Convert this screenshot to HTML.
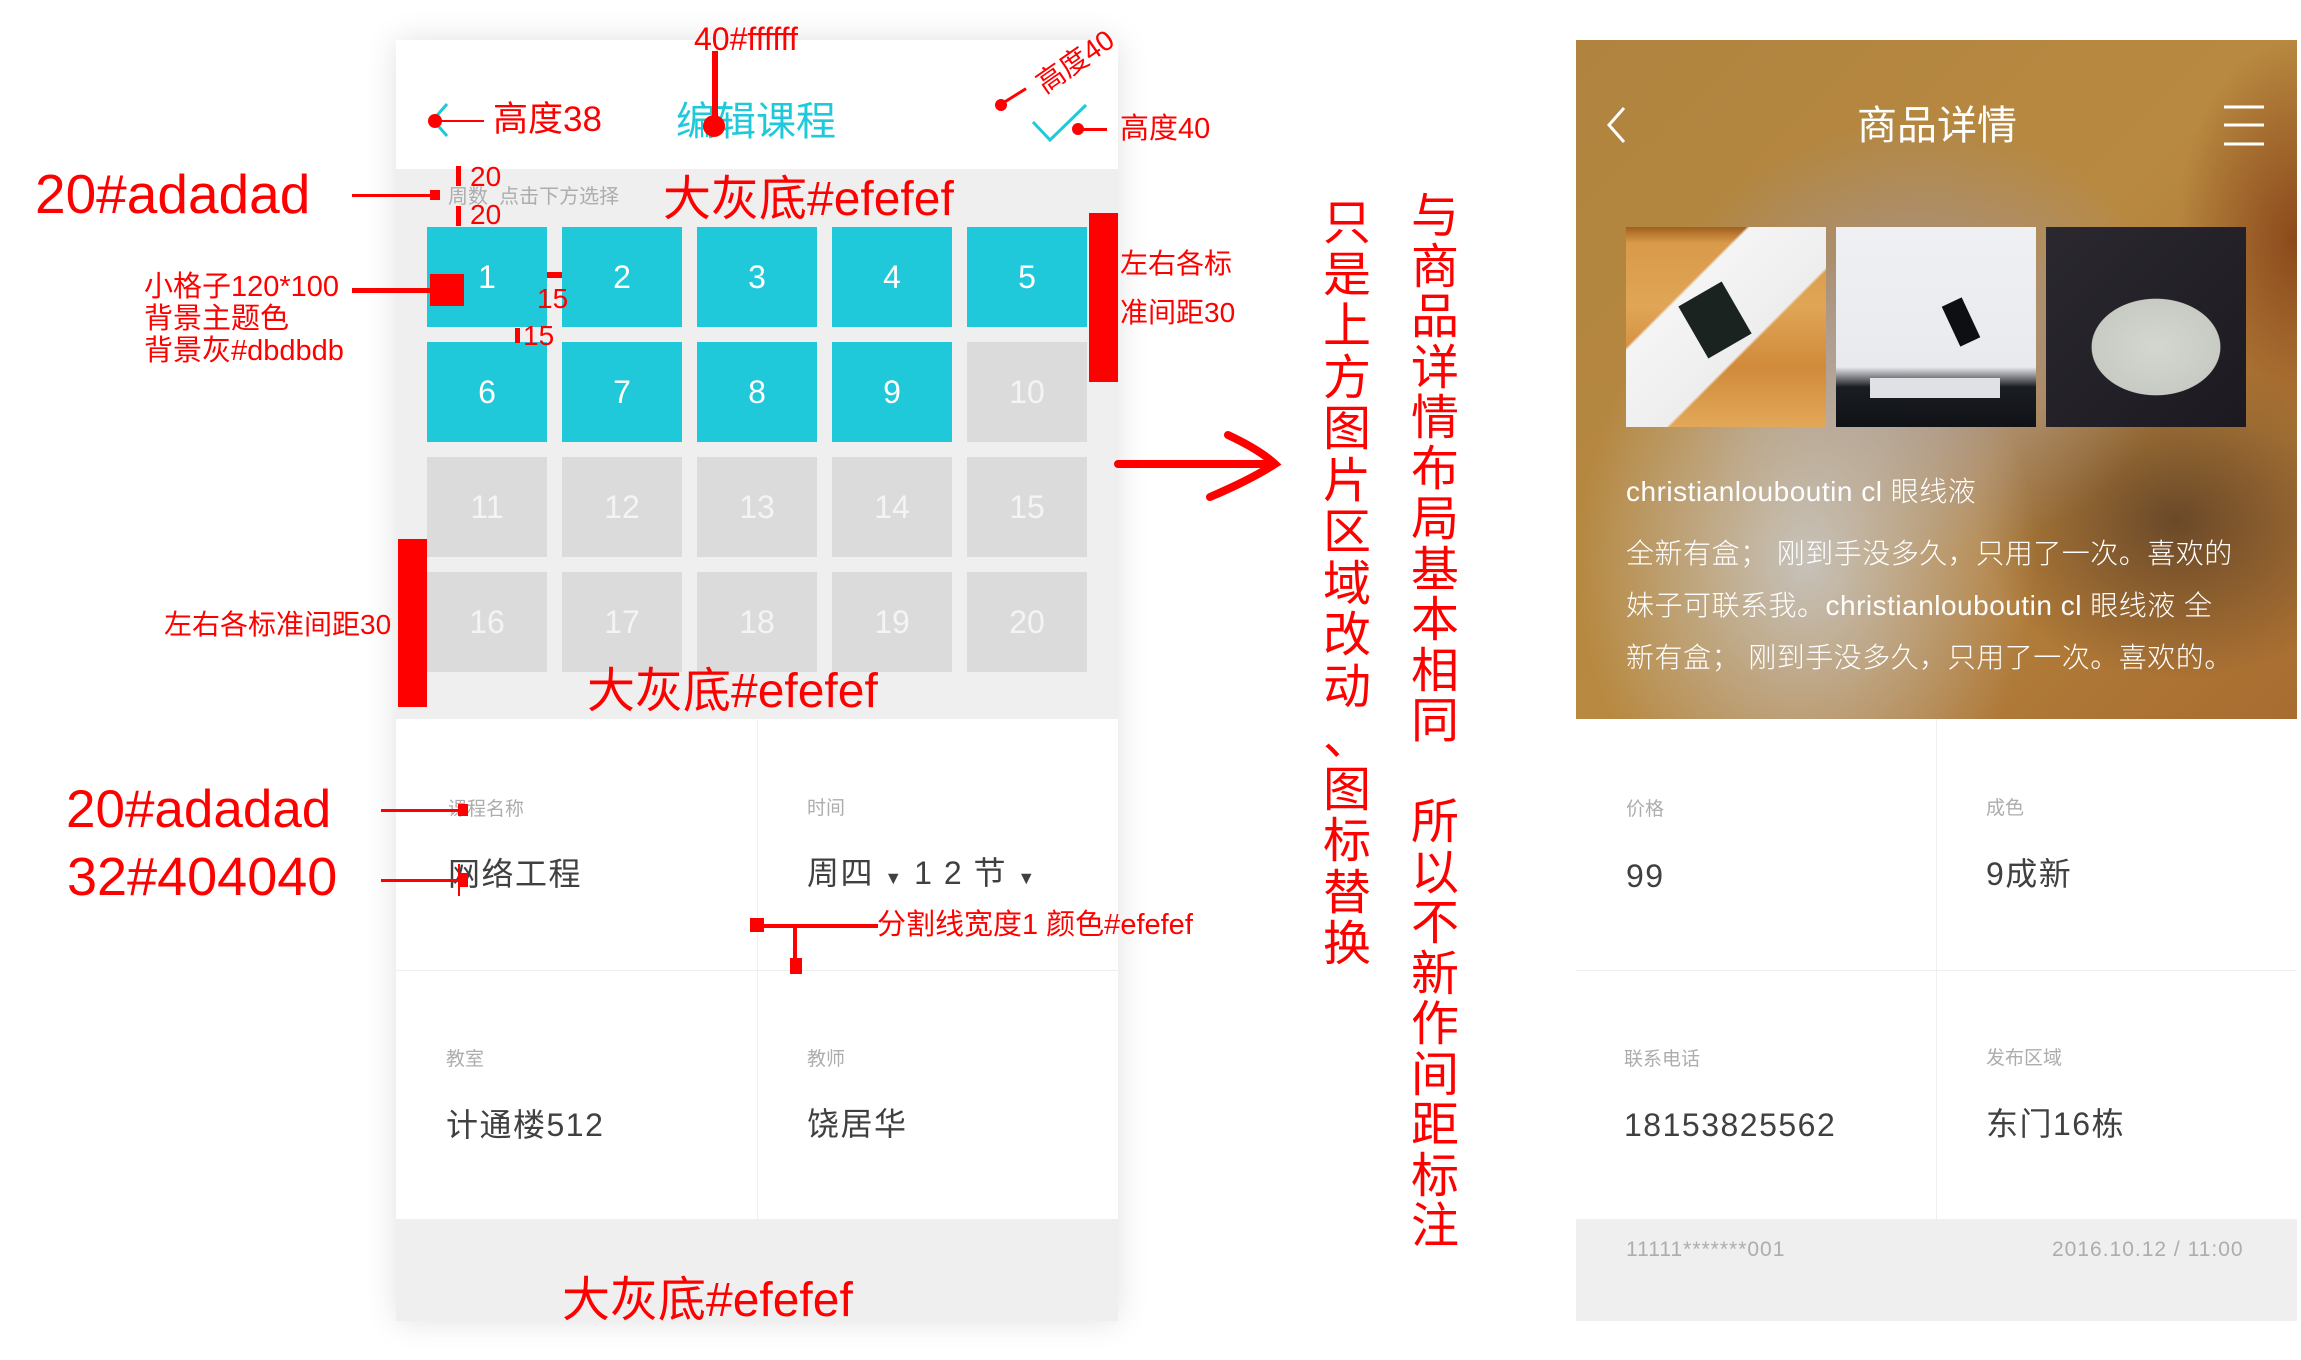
<!DOCTYPE html>
<html><head><meta charset="utf-8">
<style>
*{margin:0;padding:0;box-sizing:border-box}
body{width:2301px;height:1360px;background:#fff;position:relative;overflow:hidden;font-family:"Liberation Sans","Noto Sans CJK SC",sans-serif}
.a{position:absolute;white-space:nowrap;line-height:1}
.r{color:#ff0000}
.rb{position:absolute;background:#ff0000}
.cell{position:absolute;width:120px;height:100px;color:#fff;font-size:32px;display:flex;align-items:center;justify-content:center;font-weight:300}
.t{background:#1fc9da}.g{background:#dbdbdb;color:#f4f4f4}
.lbl{position:absolute;font-size:19px;color:#adadad;line-height:1;white-space:nowrap}
.val{position:absolute;font-size:32px;color:#404040;line-height:1;letter-spacing:1.5px;white-space:nowrap}
.v{position:absolute;color:#ff0000;font-size:48px;width:52px;text-align:center}
</style></head><body>

<!-- LEFT PHONE -->
<div style="position:absolute;left:396px;top:40px;width:722px;height:1281px;box-shadow:0 0 30px rgba(0,0,0,0.12);background:#efefef"></div>
<div style="position:absolute;left:396px;top:40px;width:722px;height:129px;background:#fff"></div>
<svg class="a" style="left:425px;top:100px" width="40" height="42"><path d="M22 4 L8 20 L22 36" stroke="#1fc9da" stroke-width="3" fill="none"/></svg>
<div class="a" style="left:676px;top:102px;font-size:40px;color:#1fc9da">编辑课程</div>
<svg class="a" style="left:1030px;top:100px" width="60" height="46"><path d="M3 22 L20 40 L56 5" stroke="#1fc9da" stroke-width="3" fill="none"/></svg>
<div class="a" style="left:448px;top:187px;font-size:20px;color:#adadad">周数&nbsp;&nbsp;点击下方选择</div>

<div class="cell t" style="left:427px;top:227px">1</div>
<div class="cell t" style="left:562px;top:227px">2</div>
<div class="cell t" style="left:697px;top:227px">3</div>
<div class="cell t" style="left:832px;top:227px">4</div>
<div class="cell t" style="left:967px;top:227px">5</div>
<div class="cell t" style="left:427px;top:342px">6</div>
<div class="cell t" style="left:562px;top:342px">7</div>
<div class="cell t" style="left:697px;top:342px">8</div>
<div class="cell t" style="left:832px;top:342px">9</div>
<div class="cell g" style="left:967px;top:342px">10</div>
<div class="cell g" style="left:427px;top:457px">11</div>
<div class="cell g" style="left:562px;top:457px">12</div>
<div class="cell g" style="left:697px;top:457px">13</div>
<div class="cell g" style="left:832px;top:457px">14</div>
<div class="cell g" style="left:967px;top:457px">15</div>
<div class="cell g" style="left:427px;top:572px">16</div>
<div class="cell g" style="left:562px;top:572px">17</div>
<div class="cell g" style="left:697px;top:572px">18</div>
<div class="cell g" style="left:832px;top:572px">19</div>
<div class="cell g" style="left:967px;top:572px">20</div>

<div style="position:absolute;left:396px;top:719px;width:722px;height:500px;background:#fff"></div>
<div style="position:absolute;left:757px;top:719px;width:1px;height:500px;background:#efefef"></div>
<div style="position:absolute;left:396px;top:970px;width:722px;height:1px;background:#efefef"></div>
<div class="lbl" style="left:448px;top:800px">课程名称</div>
<div class="val" style="left:448px;top:858px">网络工程</div>
<div class="lbl" style="left:807px;top:799px">时间</div>
<div class="val" style="left:807px;top:857px">周四 <span style="font-size:18px">▼</span> 1 2 节 <span style="font-size:18px">▼</span></div>
<div class="lbl" style="left:446px;top:1050px">教室</div>
<div class="val" style="left:446px;top:1109px">计通楼512</div>
<div class="lbl" style="left:807px;top:1050px">教师</div>
<div class="val" style="left:807px;top:1108px">饶居华</div>

<!-- RIGHT PHONE -->
<div style="position:absolute;left:1576px;top:40px;width:721px;height:679px;overflow:hidden;background:
radial-gradient(ellipse 230px 300px at 230px 520px,rgba(200,200,200,0.9),rgba(200,200,200,0) 100%),
radial-gradient(ellipse 260px 220px at 340px 300px,rgba(160,150,160,0.95),rgba(160,150,160,0) 100%),
radial-gradient(ellipse 200px 160px at 600px 480px,rgba(60,40,30,0.6),rgba(60,40,30,0) 100%),
radial-gradient(ellipse 120px 200px at 720px 200px,rgba(130,60,20,0.8),rgba(130,60,20,0) 100%),
linear-gradient(135deg,#b0843f,#b88940 50%,#a86c30)"></div>
<svg class="a" style="left:1604px;top:104px" width="30" height="42"><path d="M20 4 L5 21 L20 38" stroke="#fff" stroke-width="3" fill="none"/></svg>
<div class="a" style="left:1857px;top:106px;font-size:40px;color:#fff">商品详情</div>
<svg class="a" style="left:2222px;top:104px" width="44" height="44"><path d="M2 3H42M2 21H42M2 40H42" stroke="#fff" stroke-width="3"/></svg>
<div style="position:absolute;left:1626px;top:227px;width:200px;height:200px;background:
linear-gradient(135deg,transparent 30%,#f4f4f4 31%,#eee 60%,transparent 61%),
linear-gradient(180deg,#a0601f 0,#d99a4a 8%,#e0a556 40%,#d08a3a 70%,#e2a858)"></div>
<div style="position:absolute;left:1690px;top:290px;width:50px;height:60px;background:#1b2320;transform:rotate(-30deg)"></div>
<div style="position:absolute;left:1836px;top:227px;width:200px;height:200px;background:linear-gradient(180deg,#eef0f4 0,#e8eaee 70%,#1a1d22 80%,#101216)"></div>
<div style="position:absolute;left:1870px;top:378px;width:130px;height:20px;background:#dfe1e4"></div>
<div style="position:absolute;left:1950px;top:300px;width:22px;height:44px;background:#0d0f12;transform:rotate(-25deg)"></div>
<div style="position:absolute;left:2046px;top:227px;width:200px;height:200px;background:
radial-gradient(ellipse 80px 60px at 110px 120px,#d4d6d0,#c8cac4 80%,transparent 81%),
linear-gradient(135deg,#2b2830,#1c1a20)"></div>
<div class="a" style="left:1626px;top:478px;font-size:28px;color:#fff;font-weight:300;letter-spacing:0.5px">christianlouboutin cl 眼线液</div>
<div class="a" style="left:1626px;top:528px;font-size:28px;color:#fff;line-height:52px;font-weight:300;letter-spacing:0.5px">全新有盒； 刚到手没多久，只用了一次。喜欢的<br>妹子可联系我。christianlouboutin cl 眼线液 全<br>新有盒； 刚到手没多久，只用了一次。喜欢的。</div>

<div style="position:absolute;left:1576px;top:719px;width:721px;height:500px;background:#fff"></div>
<div style="position:absolute;left:1936px;top:719px;width:1px;height:500px;background:#efefef"></div>
<div style="position:absolute;left:1576px;top:970px;width:721px;height:1px;background:#efefef"></div>
<div style="position:absolute;left:1576px;top:1219px;width:721px;height:102px;background:#efefef"></div>
<div class="lbl" style="left:1626px;top:800px">价格</div>
<div class="val" style="left:1626px;top:860px">99</div>
<div class="lbl" style="left:1986px;top:799px">成色</div>
<div class="val" style="left:1986px;top:858px">9成新</div>
<div class="lbl" style="left:1624px;top:1050px">联系电话</div>
<div class="val" style="left:1624px;top:1109px">18153825562</div>
<div class="lbl" style="left:1986px;top:1049px">发布区域</div>
<div class="val" style="left:1986px;top:1108px">东门16栋</div>
<div class="lbl" style="left:1626px;top:1239px;font-size:21px;letter-spacing:1px">11111*******001</div>
<div class="lbl" style="left:2052px;top:1239px;font-size:21px;letter-spacing:1px">2016.10.12 / 11:00</div>

<!-- ANNOTATIONS -->
<div class="a r" style="left:694px;top:23px;font-size:32px">40#ffffff</div>
<div class="rb" style="left:712px;top:51px;width:6px;height:74px"></div>
<div class="rb" style="left:703px;top:115px;width:22px;height:22px;border-radius:50%"></div>
<div class="rb" style="left:434px;top:120px;width:50px;height:2px"></div>
<div class="rb" style="left:428px;top:114px;width:14px;height:14px;border-radius:50%"></div>
<div class="a r" style="left:493px;top:102px;font-size:35px">高度38</div>
<div class="a r" style="left:1032px;top:48px;font-size:28px;transform:rotate(-35deg)">高度40</div>
<div class="rb" style="left:1002px;top:94px;width:26px;height:3px;transform:rotate(-32deg)"></div>
<div class="rb" style="left:995px;top:99px;width:12px;height:12px;border-radius:50%"></div>
<div class="rb" style="left:1079px;top:128px;width:28px;height:3px"></div>
<div class="rb" style="left:1072px;top:123px;width:12px;height:12px;border-radius:50%"></div>
<div class="a r" style="left:1120px;top:115px;font-size:29px">高度40</div>

<div class="a r" style="left:35px;top:167px;font-size:55px">20#adadad</div>
<div class="rb" style="left:352px;top:194px;width:86px;height:3px"></div>
<div class="rb" style="left:430px;top:190px;width:10px;height:10px"></div>
<div class="rb" style="left:456px;top:166px;width:5px;height:20px"></div>
<div class="rb" style="left:456px;top:206px;width:5px;height:20px"></div>
<div class="a r" style="left:470px;top:163px;font-size:28px">20</div>
<div class="a r" style="left:470px;top:201px;font-size:28px">20</div>
<div class="a r" style="left:663px;top:176px;font-size:48px">大灰底#efefef</div>

<div class="a r" style="left:144px;top:273px;font-size:29px">小格子120*100</div>
<div class="a r" style="left:144px;top:305px;font-size:29px">背景主题色</div>
<div class="a r" style="left:144px;top:337px;font-size:29px">背景灰#dbdbdb</div>
<div class="rb" style="left:352px;top:288px;width:80px;height:5px"></div>
<div class="rb" style="left:430px;top:274px;width:34px;height:32px"></div>
<div class="rb" style="left:547px;top:272px;width:15px;height:6px"></div>
<div class="a r" style="left:537px;top:285px;font-size:28px">15</div>
<div class="rb" style="left:515px;top:328px;width:5px;height:15px"></div>
<div class="a r" style="left:523px;top:322px;font-size:28px">15</div>

<div class="rb" style="left:1089px;top:213px;width:29px;height:169px"></div>
<div class="a r" style="left:1120px;top:250px;font-size:28px">左右各标</div>
<div class="a r" style="left:1120px;top:299px;font-size:28px">准间距30</div>
<div class="rb" style="left:398px;top:539px;width:29px;height:168px"></div>
<div class="a r" style="left:164px;top:611px;font-size:28px">左右各标准间距30</div>
<div class="a r" style="left:587px;top:668px;font-size:48px">大灰底#efefef</div>

<svg class="a" style="left:1110px;top:420px" width="180" height="90"><path d="M8 44 L165 44 M118 15 Q150 30 165 44 Q140 60 100 77" stroke="#ff0000" stroke-width="8" fill="none" stroke-linecap="round"/></svg>

<div class="v" style="left:1321px;top:198px;line-height:51.5px">只<br>是<br>上<br>方<br>图<br>片<br>区<br>域<br>改<br>动<br>、<br>图<br>标<br>替<br>换</div>
<div class="v" style="left:1409px;top:192px;line-height:50.5px">与<br>商<br>品<br>详<br>情<br>布<br>局<br>基<br>本<br>相<br>同<br>&nbsp;<br>所<br>以<br>不<br>新<br>作<br>间<br>距<br>标<br>注</div>

<div class="a r" style="left:66px;top:783px;font-size:53px">20#adadad</div>
<div class="a r" style="left:67px;top:850px;font-size:54px">32#404040</div>
<div class="rb" style="left:381px;top:809px;width:80px;height:3px"></div>
<div class="rb" style="left:458px;top:804px;width:10px;height:12px"></div>
<div class="rb" style="left:381px;top:879px;width:80px;height:3px"></div>
<div class="rb" style="left:458px;top:873px;width:10px;height:14px"></div>
<div class="rb" style="left:458px;top:864px;width:2px;height:32px"></div>
<div class="rb" style="left:750px;top:918px;width:14px;height:14px"></div>
<div class="rb" style="left:760px;top:924px;width:118px;height:4px"></div>
<div class="rb" style="left:793px;top:924px;width:4px;height:40px"></div>
<div class="rb" style="left:790px;top:958px;width:12px;height:16px"></div>
<div class="a r" style="left:877px;top:911px;font-size:29px">分割线宽度1 颜色#efefef</div>
<div class="a r" style="left:562px;top:1277px;font-size:48px">大灰底#efefef</div>
</body></html>
